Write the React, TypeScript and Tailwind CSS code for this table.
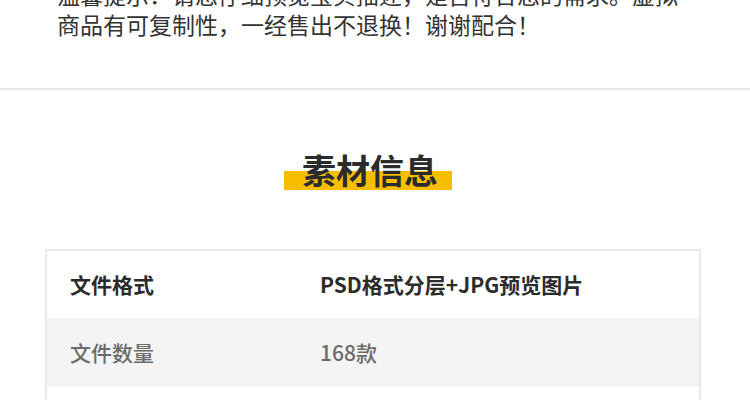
import React from "react";

const font = { fontFamily: '"Noto Sans CJK SC", "Noto Sans", sans-serif' };

export default function App() {
  return (
    <div className="w-[750px] h-[400px] overflow-hidden bg-white" style={font}>
      <div className="-mt-[21px] px-[57px] text-[23px] leading-[30px] text-[#333333]">
        温馨提示：请您仔细预览宝贝描述，是否符合您的需求。虚拟商品有可复制性，一经售出不退换！谢谢配合！
      </div>
      <div className="mt-[49px] h-[2px] bg-[#e6e6e6]" />
      <div className="flex justify-center pr-[14px] pt-[60px]">
        <div className="w-[168px] h-[40px] flex items-center justify-center bg-[linear-gradient(to_bottom,transparent_21px,#f7be00_21px)]">
          <span className="text-[34px] leading-[40px] font-bold text-[#2b2b2b] pl-[4px]">素材信息</span>
        </div>
      </div>
      <div className="mt-[59px] ml-[45px] mr-[49px] border-2 border-[#e8e8e8] border-b-0">
        <div className="flex items-center h-[67px] text-[21px] font-bold text-[#2b2b2b]">
          <div className="w-[250px] pl-[23px] shrink-0">文件格式</div>
          <div className="pl-[23px]">PSD格式分层+JPG预览图片</div>
        </div>
        <div className="flex items-center h-[69px] text-[21px] font-medium text-[#6b6b6b] bg-[#f4f4f4]">
          <div className="w-[250px] pl-[23px] shrink-0">文件数量</div>
          <div className="pl-[23px]">168款</div>
        </div>
        <div className="h-[40px]" />
      </div>
    </div>
  );
}
